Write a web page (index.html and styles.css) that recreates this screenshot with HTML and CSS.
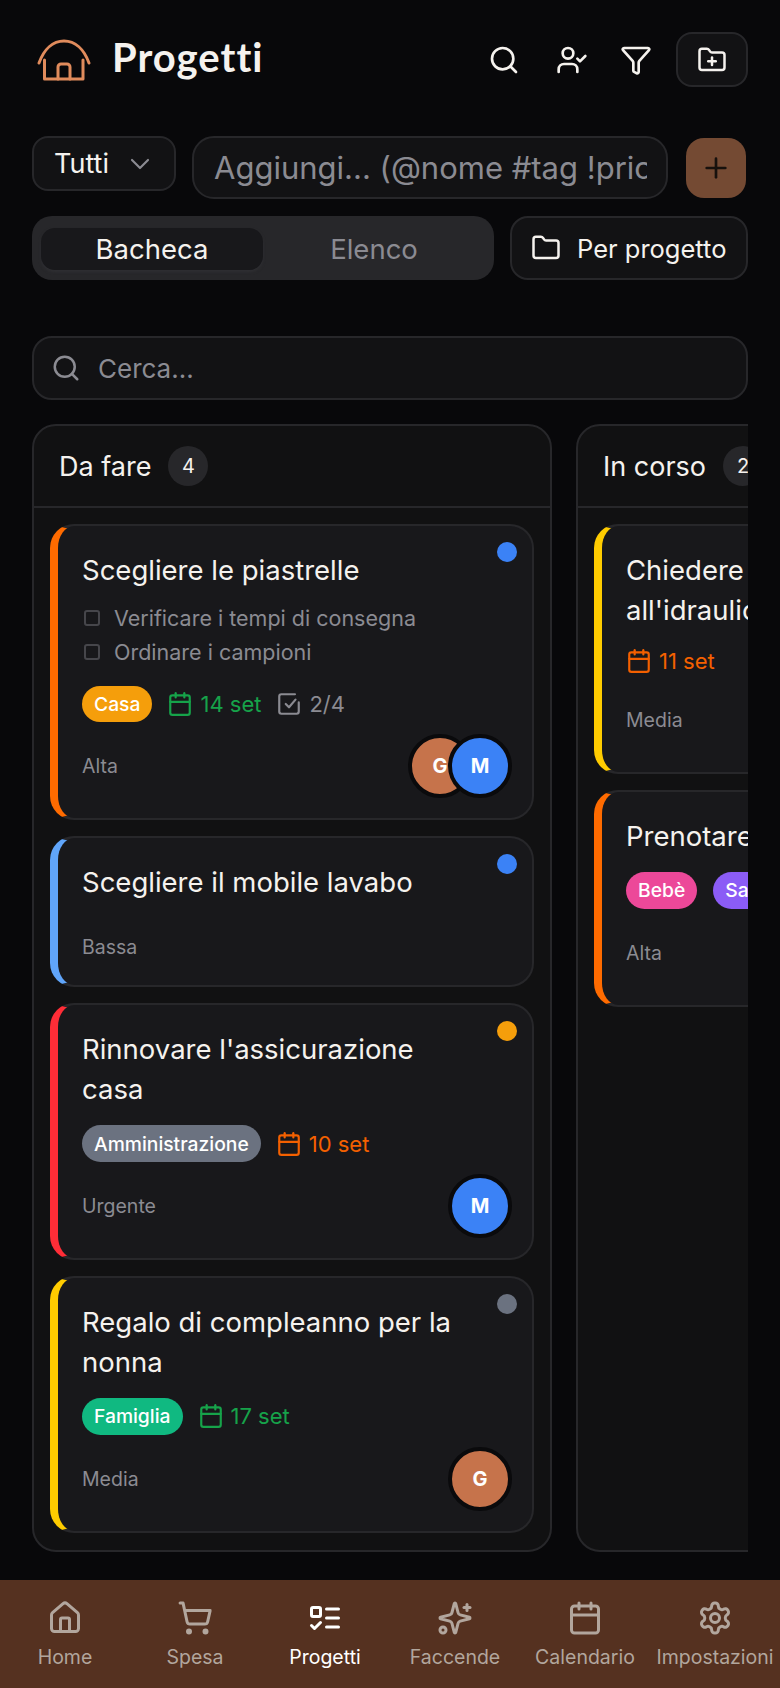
FILE: index.html
```html
<!DOCTYPE html>
<html lang="it">
<head>
<meta charset="utf-8">
<title>Progetti</title>
<link rel="stylesheet" href="styles.css">
</head>
<body>
<svg class="defs" width="0" height="0" aria-hidden="true">
  <symbol id="i-cal" viewBox="0 0 24 24"><path d="M8 2v4"/><path d="M16 2v4"/><rect width="18" height="18" x="3" y="4" rx="2"/><path d="M3 10h18"/></symbol>
  <symbol id="i-search" viewBox="0 0 24 24"><circle cx="11" cy="11" r="8"/><path d="m21 21-4.3-4.3"/></symbol>
</svg>
<main class="page">
  <header class="topbar">
    <div class="brand">
      <svg class="logo" viewBox="0 0 56 44"><path d="M3 25C8 11 17 3 28 3S48 11 53 25"/><path d="M8.500 22V41H47V22"/><path d="M22 41V29a3 3 0 0 1 3-3h6a3 3 0 0 1 3 3v12"/></svg>
      <h1 class="brand-title">Progetti</h1>
    </div>
    <div class="actions">
      <button class="ghost ghost-search"><svg class="ico32"><use href="#i-search"/></svg></button>
      <button class="ghost"><svg class="ico32" viewBox="0 0 24 24"><path d="M16 21v-2a4 4 0 0 0-4-4H6a4 4 0 0 0-4 4v2"/><circle cx="9" cy="7" r="4"/><polyline points="16 11 18 13 22 9"/></svg></button>
      <button class="ghost ghost-filter"><svg class="ico32" viewBox="0 0 24 24"><path d="M10 20a1 1 0 0 0 .553.895l2 1A1 1 0 0 0 14 21v-7a2 2 0 0 1 .517-1.341L21.740 4.670A1 1 0 0 0 21 3H3a1 1 0 0 0-.742 1.670l7.225 7.989A2 2 0 0 1 10 14z"/></svg></button>
      <button class="boxed-ico"><svg class="ico30" viewBox="0 0 24 24"><path d="M12 10v6"/><path d="M9 13h6"/><path d="M20 20a2 2 0 0 0 2-2V8a2 2 0 0 0-2-2h-7.900a2 2 0 0 1-1.690-.9L9.600 3.900A2 2 0 0 0 7.930 3H4a2 2 0 0 0-2 2v13a2 2 0 0 0 2 2Z"/></svg></button>
    </div>
  </header>

  <div class="add-row">
    <div class="select">Tutti<svg class="ico32 chev" viewBox="0 0 24 24"><path d="m6 9 6 6 6-6"/></svg></div>
    <div class="add-input"><div class="add-text">Aggiungi... (@nome #tag !priorità)</div></div>
    <button class="add-btn"><svg class="ico32" viewBox="0 0 24 24"><path d="M5 12h14"/><path d="M12 5v14"/></svg></button>
  </div>

  <div class="view-row">
    <div class="segment">
      <div class="seg seg-on">Bacheca</div>
      <div class="seg">Elenco</div>
    </div>
    <button class="group-btn"><svg class="ico30" viewBox="0 0 24 24"><path d="M20 20a2 2 0 0 0 2-2V8a2 2 0 0 0-2-2h-7.900a2 2 0 0 1-1.690-.9L9.600 3.900A2 2 0 0 0 7.930 3H4a2 2 0 0 0-2 2v13a2 2 0 0 0 2 2Z"/></svg>Per progetto</button>
  </div>

  <div class="search"><svg class="ico30"><use href="#i-search"/></svg>Cerca...</div>

  <div class="board">
    <section class="column">
      <div class="col-head"><span class="col-title">Da fare</span><span class="count">4</span></div>
      <div class="col-body">
        <article class="card p-high">
          <span class="dot d-blue"></span>
          <h3 class="card-title">Scegliere le piastrelle</h3>
          <ul class="subs">
            <li class="sub"><span class="box"></span>Verificare i tempi di consegna</li>
            <li class="sub"><span class="box"></span>Ordinare i campioni</li>
          </ul>
          <div class="meta meta-tight">
            <span class="tag t-amber">Casa</span>
            <span class="date green"><svg class="ico26"><use href="#i-cal"/></svg>14 set</span>
            <span class="date grey"><svg class="ico26" viewBox="0 0 24 24"><path d="M21 10.500V19a2 2 0 0 1-2 2H5a2 2 0 0 1-2-2V5a2 2 0 0 1 2-2h12.500"/><path d="m9 12 3 3 6-7"/></svg>2/4</span>
          </div>
          <div class="foot"><span class="prio">Alta</span>
            <div class="avatars"><span class="av av-g">G</span><span class="av av-m">M</span></div></div>
        </article>
        <article class="card p-low">
          <span class="dot d-blue"></span>
          <h3 class="card-title">Scegliere il mobile lavabo</h3>
          <div class="foot foot-short"><span class="prio">Bassa</span></div>
        </article>
        <article class="card p-urgent">
          <span class="dot d-amber"></span>
          <h3 class="card-title">Rinnovare l'assicurazione casa</h3>
          <div class="meta">
            <span class="tag t-grey">Amministrazione</span>
            <span class="date orange"><svg class="ico26"><use href="#i-cal"/></svg>10 set</span>
          </div>
          <div class="foot"><span class="prio">Urgente</span>
            <div class="avatars"><span class="av av-m">M</span></div></div>
        </article>
        <article class="card p-mid">
          <span class="dot d-grey"></span>
          <h3 class="card-title">Regalo di compleanno per la nonna</h3>
          <div class="meta">
            <span class="tag t-green">Famiglia</span>
            <span class="date green"><svg class="ico26"><use href="#i-cal"/></svg>17 set</span>
          </div>
          <div class="foot"><span class="prio">Media</span>
            <div class="avatars"><span class="av av-g">G</span></div></div>
        </article>
      </div>
    </section>

    <section class="column">
      <div class="col-head"><span class="col-title">In corso</span><span class="count">2</span></div>
      <div class="col-body">
        <article class="card p-mid">
          <span class="dot d-blue"></span>
          <h3 class="card-title">Chiedere un preventivo all'idraulico</h3>
          <div class="meta">
            <span class="date orange"><svg class="ico26"><use href="#i-cal"/></svg>11 set</span>
          </div>
          <div class="foot"><span class="prio">Media</span></div>
        </article>
        <article class="card p-high">
          <span class="dot d-blue"></span>
          <h3 class="card-title">Prenotare la visita</h3>
          <div class="meta meta-tags">
            <span class="tag t-pink">Bebè</span>
            <span class="tag t-purple">Salute</span>
          </div>
          <div class="foot"><span class="prio">Alta</span></div>
        </article>
      </div>
    </section>
  </div>
</main>

<nav class="tabbar">
  <a class="tab"><svg class="ico36" viewBox="0 0 24 24"><path d="M15 21v-8a1 1 0 0 0-1-1h-4a1 1 0 0 0-1 1v8"/><path d="M3 10a2 2 0 0 1 .709-1.528l7-5.999a2 2 0 0 1 2.582 0l7 5.999A2 2 0 0 1 21 10v9a2 2 0 0 1-2 2H5a2 2 0 0 1-2-2z"/></svg>Home</a>
  <a class="tab"><svg class="ico36" viewBox="0 0 24 24"><circle cx="8" cy="21" r="1"/><circle cx="19" cy="21" r="1"/><path d="M2.050 2.050h2l2.660 12.420a2 2 0 0 0 2 1.580h9.780a2 2 0 0 0 1.950-1.570l1.650-7.430H5.120"/></svg>Spesa</a>
  <a class="tab tab-on"><svg class="ico36" viewBox="0 0 24 24"><rect x="3" y="5" width="6" height="6" rx="1"/><path d="m3 17 2 2 4-4"/><path d="M13 6h8"/><path d="M13 12h8"/><path d="M13 18h8"/></svg>Progetti</a>
  <a class="tab"><svg class="ico36" viewBox="0 0 24 24"><path d="M9.937 15.500A2 2 0 0 0 8.500 14.063l-6.135-1.582a.5.5 0 0 1 0-.962L8.500 9.936A2 2 0 0 0 9.937 8.500l1.582-6.135a.5.5 0 0 1 .963 0L14.063 8.500A2 2 0 0 0 15.500 9.937l6.135 1.581a.5.5 0 0 1 0 .964L15.500 14.063a2 2 0 0 0-1.437 1.437l-1.582 6.135a.5.5 0 0 1-.963 0z"/><path d="M20 3v4"/><path d="M22 5h-4"/><circle cx="4" cy="20" r="2"/></svg>Faccende</a>
  <a class="tab"><svg class="ico36"><use href="#i-cal"/></svg>Calendario</a>
  <a class="tab"><svg class="ico36" viewBox="0 0 24 24"><path d="M12.220 2h-.44a2 2 0 0 0-2 2v.18a2 2 0 0 1-1 1.730l-.43.25a2 2 0 0 1-2 0l-.15-.08a2 2 0 0 0-2.730.73l-.22.38a2 2 0 0 0 .73 2.730l.15.1a2 2 0 0 1 1 1.720v.51a2 2 0 0 1-1 1.740l-.15.09a2 2 0 0 0-.73 2.730l.22.38a2 2 0 0 0 2.730.73l.15-.08a2 2 0 0 1 2 0l.43.25a2 2 0 0 1 1 1.730V20a2 2 0 0 0 2 2h.44a2 2 0 0 0 2-2v-.18a2 2 0 0 1 1-1.730l.43-.25a2 2 0 0 1 2 0l.15.08a2 2 0 0 0 2.730-.73l.22-.39a2 2 0 0 0-.73-2.730l-.15-.08a2 2 0 0 1-1-1.740v-.5a2 2 0 0 1 1-1.740l.15-.09a2 2 0 0 0 .73-2.730l-.22-.38a2 2 0 0 0-2.730-.73l-.15.08a2 2 0 0 1-2 0l-.43-.25a2 2 0 0 1-1-1.730V4a2 2 0 0 0-2-2z"/><circle cx="12" cy="12" r="3"/></svg>Impostazioni</a>
</nav>
</body>
</html>
```

FILE: styles.css
```css
* { box-sizing: border-box; }
html, body { margin: 0; height: 100%; }
body {
  width: 780px;
  height: 1688px;
  overflow: hidden;
  display: flex;
  flex-direction: column;
  background: #08080a;
  color: #f5f2ee;
  font-family: "Inter", "Liberation Sans", sans-serif;
}
.defs { position: absolute; }
button { font: inherit; color: inherit; letter-spacing: inherit; background: none; border: 0; padding: 0; }
svg { fill: none; stroke: currentColor; stroke-width: 2; stroke-linecap: round; stroke-linejoin: round; flex: none; }
.ico32 { width: 32px; height: 32px; }
.ico30 { width: 30px; height: 30px; }
.ico26 { width: 26px; height: 26px; }
.ico36 { width: 36px; height: 36px; }

.page { flex: 1; min-height: 0; padding: 32px 32px 0; display: flex; flex-direction: column; }

.topbar { display: flex; justify-content: space-between; align-items: center; height: 55px; flex: none; }
.brand { display: flex; align-items: center; gap: 20px; padding-left: 4px; }
.logo { width: 56px; height: 44px; color: #e08b5c; stroke-width: 3; }
.brand-title { margin: 0 0 6px; font-family: "Lato", sans-serif; font-size: 40px; font-weight: 700; letter-spacing: 1px; line-height: 44px; }
.actions { display: flex; align-items: center; }
.ghost { width: 64px; height: 55px; display: flex; align-items: center; justify-content: center; }
.ghost-search { margin-right: 4px; }
.ghost-filter { margin-right: 8px; }
.boxed-ico { width: 72px; height: 55px; border: 2px solid #27272a; border-radius: 16px; background: #121214; display: flex; align-items: center; justify-content: center; }

.add-row { display: flex; align-items: flex-start; margin-top: 49px; flex: none; }
.select { width: 144px; height: 55px; border: 2px solid #27272a; border-radius: 16px; background: #121214; display: flex; align-items: center; justify-content: space-between; padding: 0 18px 0 20px; font-size: 27px; }
.chev { color: #8b8b92; stroke-width: 1.600; }
.add-input { flex: 1; min-width: 0; height: 63px; margin-left: 16px; border: 2px solid #27272a; border-radius: 22px; background: #121214; padding: 0 19px 0 20px; }
.add-text { overflow: hidden; white-space: nowrap; font-size: 31px; line-height: 59px; color: #8b8b92; }
.add-btn { width: 60px; height: 60px; margin: 2px 2px 0 18px; border-radius: 18px; background: #744a33; color: #17110d; display: flex; align-items: center; justify-content: center; }

.view-row { display: flex; gap: 16px; margin-top: 17px; flex: none; }
.segment { width: 462px; height: 64px; background: #27272a; border-radius: 20px; padding: 12px 9px 10px; display: grid; grid-template-columns: 1fr 1fr; }
.seg { display: flex; align-items: center; justify-content: center; font-size: 27.500px; border-radius: 14px; color: #8b8b92; }
.seg-on { background: #18181b; color: #f5f2ee; box-shadow: 0 2px 3px #2f2f33; }
.group-btn { flex: 1; height: 64px; border: 2px solid #27272a; border-radius: 18px; background: #121214; display: flex; align-items: center; gap: 16px; padding-left: 19px; font-size: 25.500px; }

.search { flex: none; height: 64px; margin-top: 56px; border: 2px solid #27272a; border-radius: 20px; background: #121214; display: flex; align-items: center; gap: 17px; padding-left: 17px; font-size: 26px; color: #8b8b92; }

.board { flex: none; height: 1128px; margin-top: 24px; display: flex; gap: 24px; overflow: hidden; }
.column { flex: none; width: 520px; border: 2px solid #27272a; border-radius: 24px; background: #111112; }
.col-head { height: 82px; border-bottom: 2px solid #27272a; display: flex; align-items: center; gap: 17px; padding: 0 24px 0 25px; }
.col-title { font-size: 27px; }
.count { width: 40px; height: 40px; border-radius: 50%; background: #27272a; display: flex; align-items: center; justify-content: center; font-size: 20px; }
.col-body { padding: 16px; display: flex; flex-direction: column; gap: 16.200px; }

.card { position: relative; border: 2px solid #27272a; border-left: 8px solid; border-radius: 24px; background: #18181b; padding: 24px 20px 20px 24px; }
.p-high { border-left-color: #ff6b00; }
.p-low { border-left-color: #60a5fa; }
.p-urgent { border-left-color: #ff2d37; }
.p-mid { border-left-color: #ffcc00; }
.dot { position: absolute; top: 16px; right: 15px; width: 20px; height: 20px; border-radius: 50%; }
.d-blue { background: #3b82f6; }
.d-amber { background: #f59e0b; }
.d-grey { background: #6b7280; }
.card-title { margin: 0; padding-right: 30px; font-size: 27.500px; font-weight: 400; line-height: 40px; }

.subs { list-style: none; margin: 14px 0 0; padding: 0; display: flex; flex-direction: column; gap: 6px; }
.sub { display: flex; align-items: center; gap: 14px; height: 28px; font-size: 21.500px; color: #8b8b92; }
.box { width: 16px; height: 16px; border: 2px solid #46464b; border-radius: 3px; flex: none; margin-left: 2px; }

.meta { display: flex; align-items: center; gap: 15px; margin-top: 16px; min-height: 30px; }
.meta-tight { margin-top: 19.500px; }
.meta-tags { gap: 16px; }
.tag { height: 36.500px; padding: 0 12px; border-radius: 19px; color: #fff; display: flex; align-items: center; font-size: 19.300px; font-weight: 500; }
.t-amber { background: #f59e0b; }
.t-grey { background: #6b7280; }
.t-green { background: #10b981; }
.t-pink { background: #ec4899; }
.t-purple { background: #8b5cf6; }
.date { display: flex; align-items: center; gap: 7px; font-size: 22px; }
.green { color: #16a34a; }
.orange { color: #f46000; }
.grey { color: #8b8b92; }

.foot { display: flex; align-items: center; justify-content: space-between; height: 64px; margin-top: 12px; }
.foot-short { height: 36px; margin-top: 27px; }
.prio { font-size: 19.500px; color: #8b8b92; }
.avatars { display: flex; }
.av { width: 64px; height: 64px; border: 4px solid #0a0a0c; border-radius: 50%; display: flex; align-items: center; justify-content: center; color: #fff; font-size: 20px; font-weight: 700; }
.av + .av { margin-left: -24px; }
.av-g { background: #c6734b; }
.av-m { background: #3b82f6; }

.tabbar { flex: none; height: 108px; background: #553120; display: grid; grid-template-columns: repeat(6, 130px); }
.tab { display: flex; flex-direction: column; align-items: center; padding-top: 20px; gap: 9px; font-size: 19.500px; line-height: 24px; color: #b2a69d; white-space: nowrap; }
.tab-on { color: #fff; }
```
